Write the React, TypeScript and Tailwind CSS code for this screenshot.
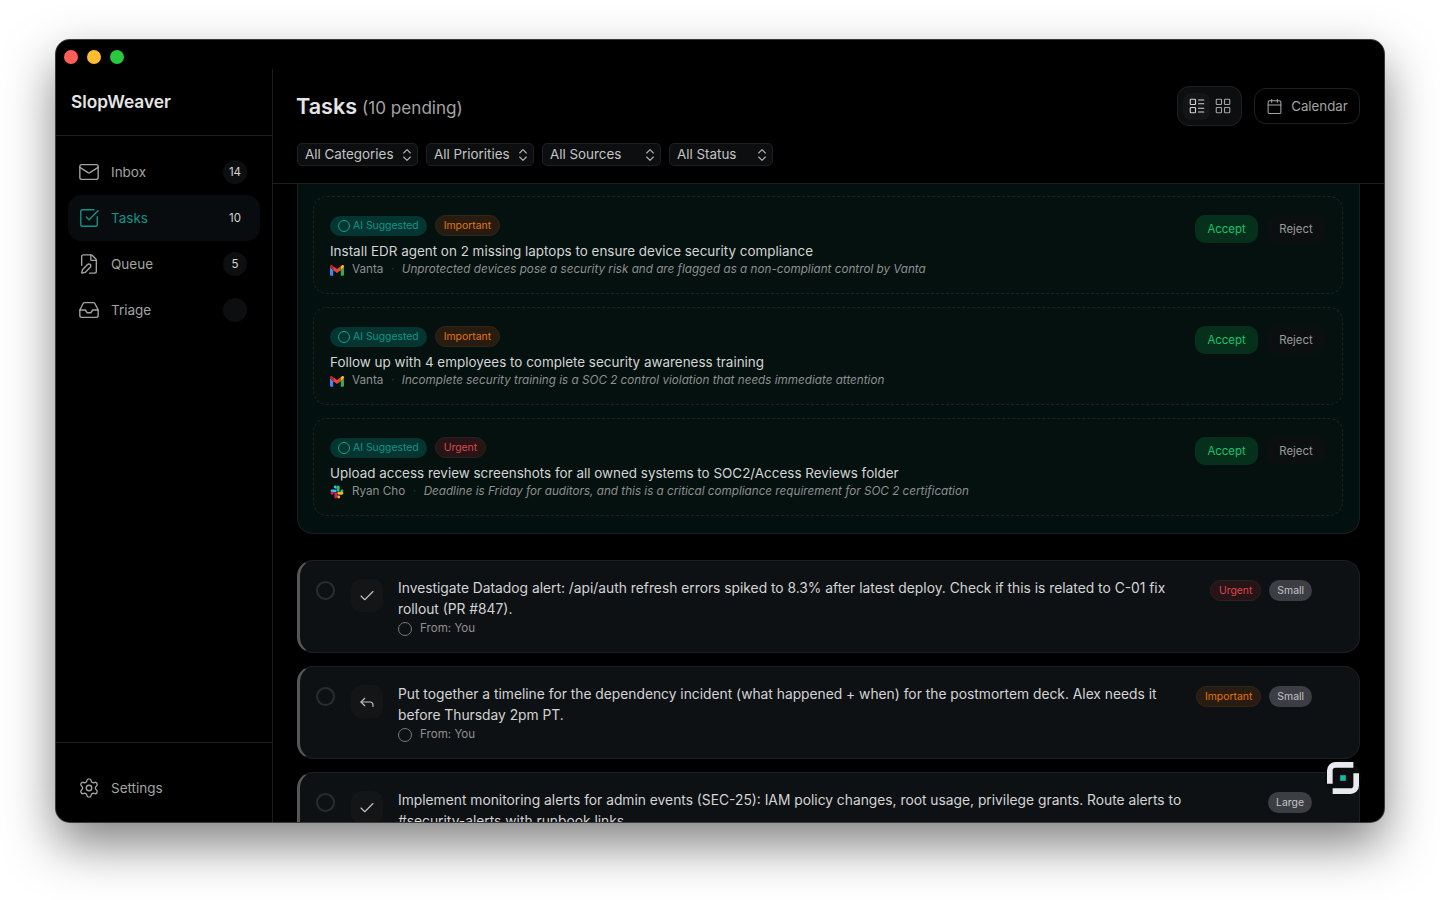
import { Calendar, Check, ChevronsUpDown, FilePen, Inbox, LayoutGrid, LayoutList, Mail, Reply, Settings, SquareCheckBig } from "lucide-react"
import type { ReactNode } from "react"

function GmailIcon() {
  return (
    <svg viewBox="0 0 24 18" className="w-[14px] h-[11px] shrink-0">
      <path fill="#4285F4" d="M0 3v13.4C0 17.3.7 18 1.6 18h3.9V8.5L0 3z" />
      <path fill="#34A853" d="M18.5 8.5V18h3.9c.9 0 1.6-.7 1.6-1.6V3l-5.5 5.5z" />
      <path fill="#EA4335" d="M5.5 8.5V1.6L12 6.5l6.5-4.9v6.9L12 13.4 5.5 8.5z" />
      <path fill="#FBBC04" d="M18.5 1.6v6.9L24 3V2c0-1.8-2.1-2.900-3.600-1.800l-1.900 1.400z" />
      <path fill="#C5221F" d="M0 3l5.500 5.500V1.600L3.600.2C2.100-.9 0 .2 0 2v1z" />
    </svg>
  )
}

function SlackIcon() {
  return (
    <svg viewBox="0 0 24 24" className="w-[14px] h-[14px] shrink-0">
      <path fill="#36C5F0" d="M9 1a2.500 2.500 0 0 0 0 5h2.500V3.500A2.500 2.500 0 0 0 9 1zM3.500 7.500a2.500 2.500 0 0 0 0 5H9a2.500 2.500 0 0 0 0-5H3.500z" />
      <path fill="#2EB67D" d="M23 10a2.500 2.500 0 0 0-5 0v2.500h2.500A2.500 2.500 0 0 0 23 10zM16.500 3.500a2.500 2.500 0 0 0-5 0V9a2.500 2.500 0 0 0 5 0V3.500z" />
      <path fill="#ECB22E" d="M15 23a2.500 2.500 0 0 0 0-5h-2.500v2.500A2.500 2.500 0 0 0 15 23zM20.500 16.500a2.500 2.500 0 0 0 0-5H15a2.500 2.500 0 0 0 0 5h5.500z" />
      <path fill="#E01E5A" d="M1 14a2.500 2.500 0 0 0 5 0v-2.500H3.500A2.500 2.500 0 0 0 1 14zM7.500 20.500a2.500 2.500 0 0 0 5 0V15a2.500 2.500 0 0 0-5 0v5.500z" />
    </svg>
  )
}

function Logo() {
  return (
    <div className="absolute right-[23px] bottom-[26px] w-[36px] h-[36px] rounded-full bg-[#0a0c0e] flex items-center justify-center">
      <svg viewBox="0 0 34 34" className="w-[32px] h-[34px]">
        <path d="M3 23V9A6 6 0 0 1 9 3H28" fill="none" stroke="#e8eaed" strokeWidth="6" />
        <path d="M31 12V25A6 6 0 0 1 25 31H6" fill="none" stroke="#e8eaed" strokeWidth="6" />
        <rect x="14" y="14" width="6" height="6" fill="#14b8a6" />
      </svg>
    </div>
  )
}

function NavItem({ icon, label, count, active, empty }: { icon: ReactNode; label: string; count?: string; active?: boolean; empty?: boolean }) {
  return (
    <div className={`flex items-center h-[46px] pl-[10px] pr-[13px] rounded-[14px] ${active ? "bg-[#090c0e] text-[#0d9488]" : "text-[#a3a3a3]"}`}>
      <span className="w-[22px] flex justify-center">{icon}</span>
      <span className="ml-[11px] text-[13.5px]">{label}</span>
      {(count || empty) && (
        <span className={`ml-auto w-6 h-6 pt-px rounded-full flex items-center justify-center text-[11.5px] text-[#d4d4d4] ${active ? "" : "bg-[#0c0e10]"}`}>
          {count}
        </span>
      )}
    </div>
  )
}

function Filter({ label, width }: { label: string; width: string }) {
  return (
    <div className={`${width} h-[23px] pl-[7px] pr-[2px] flex items-center justify-between rounded-[5px] border border-[#1e2124] bg-[#0c0e10] text-[13.4px] whitespace-nowrap text-[#c4c4c4]`}>
      <span>{label}</span>
      <ChevronsUpDown className="w-4 h-4 text-[#b0b0b0]" strokeWidth={1.75} />
    </div>
  )
}

function PriorityBadge({ label }: { label: string }) {
  const urgent = label === "Urgent"
  return (
    <span className={`h-[21px] px-2 flex items-center rounded-full border text-[10.4px] ${urgent ? "bg-[#261416] border-[#302020] text-[#dc4a4f]" : "bg-[#281b10] border-[#32261a] text-[#e0760f]"}`}>
      {label}
    </span>
  )
}

const suggestions = [
  { priority: "Important", title: "Install EDR agent on 2 missing laptops to ensure device security compliance", source: "Vanta", reason: "Unprotected devices pose a security risk and are flagged as a non-compliant control by Vanta" },
  { priority: "Important", title: "Follow up with 4 employees to complete security awareness training", source: "Vanta", reason: "Incomplete security training is a SOC 2 control violation that needs immediate attention" },
  { priority: "Urgent", title: "Upload access review screenshots for all owned systems to SOC2/Access Reviews folder", source: "Ryan Cho", reason: "Deadline is Friday for auditors, and this is a critical compliance requirement for SOC 2 certification", slack: true },
]

const tasks = [
  { title: "Investigate Datadog alert: /api/auth refresh errors spiked to 8.3% after latest deploy. Check if this is related to C-01 fix rollout (PR #847).", priority: "Urgent", size: "Small" },
  { title: "Put together a timeline for the dependency incident (what happened + when) for the postmortem deck. Alex needs it before Thursday 2pm PT.", priority: "Important", size: "Small", reply: true },
  { title: "Implement monitoring alerts for admin events (SEC-25): IAM policy changes, root usage, privilege grants. Route alerts to #security-alerts with runbook links.", size: "Large" },
]

export default function App() {
  return (
    <div className="h-screen bg-white pt-10 px-14 font-['Inter',sans-serif] overflow-hidden">
      <div className="relative h-[782px] flex flex-col bg-black rounded-[14px] overflow-hidden ring-1 ring-[#3a3a3a] shadow-[0_22px_50px_rgba(0,0,0,0.5)]">
        {/* Title bar */}
        <div className="h-[29px] shrink-0 flex items-center gap-[9px] pl-2 pt-[5px]">
          <span className="w-[14px] h-[14px] rounded-full bg-[#ff5f57]" />
          <span className="w-[14px] h-[14px] rounded-full bg-[#febc2e]" />
          <span className="w-[14px] h-[14px] rounded-full bg-[#28c840]" />
        </div>

        <div className="flex flex-1 min-h-0">
          {/* Sidebar */}
          <aside className="w-[217px] shrink-0 flex flex-col border-r border-[#1c1e20]">
            <div className="h-[67px] shrink-0 flex items-center px-[15px] border-b border-[#1c1e20]">
              <span className="text-[17.3px] font-semibold text-[#e5e5e5]">SlopWeaver</span>
            </div>
            <nav className="pt-[13px] px-3">
              <NavItem icon={<Mail className="w-[22px] h-[22px]" strokeWidth={1.5} />} label="Inbox" count="14" />
              <NavItem active icon={<SquareCheckBig className="w-[22px] h-[22px]" strokeWidth={1.5} />} label="Tasks" count="10" />
              <NavItem icon={<FilePen className="w-[22px] h-[22px]" strokeWidth={1.5} />} label="Queue" count="5" />
              <NavItem empty icon={<Inbox className="w-[22px] h-[22px]" strokeWidth={1.5} />} label="Triage" />
            </nav>
            <div className="mt-auto h-[80px] shrink-0 border-t border-[#1c1e20] pt-[22px] px-3">
              <NavItem icon={<Settings className="w-[22px] h-[22px]" strokeWidth={1.5} />} label="Settings" />
            </div>
          </aside>

          {/* Main */}
          <main className="flex-1 min-w-0 flex flex-col">
            <header className="h-[115px] shrink-0 border-b border-[#1c1e20] px-6 pt-[17px]">
              <div className="flex items-center h-10">
                <h1 className="-ml-px text-[21.6px] font-semibold text-[#e5e5e5]">Tasks</h1>
                <span className="ml-[5px] mt-[4px] text-[17.1px] text-[#a3a3a3]">(10 pending)</span>
                <div className="ml-auto h-10 flex items-center p-[5px] rounded-[12px] border border-[#1e2124] bg-[#0c0e10]">
                  <span className="w-[27px] h-[27px] rounded-lg bg-[#131517] flex items-center justify-center">
                    <LayoutList className="w-[18px] h-[18px] text-[#d4d4d4]" strokeWidth={1.5} />
                  </span>
                  <span className="w-[26px] h-[27px] flex items-center justify-center">
                    <LayoutGrid className="w-[18px] h-[18px] text-[#a3a3a3]" strokeWidth={1.5} />
                  </span>
                </div>
                <div className="ml-3 h-9 w-[106px] pt-px flex items-center justify-center gap-2 rounded-[12px] border border-[#1e2124] text-[13.3px] text-[#a3a3a3]">
                  <Calendar className="w-[17px] h-[17px]" strokeWidth={1.5} />
                  Calendar
                </div>
              </div>
              <div className="mt-[17px] flex gap-2">
                <Filter label="All Categories" width="w-[121px]" />
                <Filter label="All Priorities" width="w-[108px]" />
                <Filter label="All Sources" width="w-[119px]" />
                <Filter label="All Status" width="w-[104px]" />
              </div>
            </header>

            <div className="flex-1 min-h-0 overflow-hidden px-6">
              {/* AI suggestions */}
              <section className="flex flex-col gap-[13px] pt-3 pl-[15px] pr-4 pb-[17px] bg-[#02110f] border-x border-b border-[#16211f] rounded-b-[16px]">
                {suggestions.map((s) => (
                  <div key={s.title} className="flex justify-between h-[98px] pt-[18px] pl-4 pr-4 bg-[#05110f] border border-dashed border-[#1a2523] rounded-[14px]">
                    <div>
                      <div className="flex items-center gap-2">
                        <span className="h-5 pl-2 pr-2 flex items-center gap-[3px] rounded-full bg-[#053531] text-[10.4px] text-[#0d9488]">
                          <span className="w-3 h-3 rounded-full border-[1.5px] border-[#0fa08f]" />
                          AI Suggested
                        </span>
                        <PriorityBadge label={s.priority} />
                      </div>
                      <p className="mt-[5px] text-[13.44px] leading-5 text-[#d4d4d4]">{s.title}</p>
                      <div className="flex items-center h-4 mt-px text-[11.7px] text-[#8f8f8f]">
                        <span className="w-[14px] flex justify-center">{s.slack ? <SlackIcon /> : <GmailIcon />}</span>
                        <span className="ml-2">{s.source}</span>
                        <span className="mx-[7.5px] text-[#333]">·</span>
                        <span className="italic">{s.reason}</span>
                      </div>
                    </div>
                    <div className="flex items-start gap-2">
                      <span className="w-[63px] h-7 pt-px rounded-[10px] bg-[#06301c] text-[#14c46c] text-[11.4px] flex items-center justify-center">Accept</span>
                      <span className="w-[60px] h-7 pt-px rounded-[10px] bg-[#0c0f10] text-[#9a9a9a] text-[11.4px] flex items-center justify-center">Reject</span>
                    </div>
                  </div>
                ))}
              </section>

              {/* Tasks */}
              <div className="mt-[26px] flex flex-col gap-[13px]">
                {tasks.map((t) => (
                  <div key={t.title} className="shrink-0 flex h-[93px] pt-[18px] pl-4 bg-[#0e1114] border border-[#1c1f22] border-l-[3px] border-l-[#55585b] rounded-[16px]">
                    <span className="mt-[2px] w-[19px] h-[19px] rounded-full border-2 border-[#2a2d30] shrink-0" />
                    <span className="ml-4 w-8 h-[33px] rounded-[10px] bg-[#131517] flex items-center justify-center shrink-0 text-[#c4c4c4]">
                      {t.reply ? <Reply className="w-[18px] h-[18px]" strokeWidth={1.5} /> : <Check className="w-[18px] h-[18px]" strokeWidth={1.5} />}
                    </span>
                    <div className="ml-[15px] w-[790px] shrink-0 -mt-px">
                      <p className="text-[13.8px] leading-[21px] text-[#d4d4d4]">{t.title}</p>
                      <div className="mt-px flex items-center gap-2 h-[15px] text-[11.6px] text-[#8f8f8f]">
                        <span className="w-[14px] h-[14px] rounded-full border-[1.5px] border-[#777]" />
                        From: You
                      </div>
                    </div>
                    <div className="ml-auto mr-[47px] h-[21px] mt-px flex items-center gap-2">
                      {t.priority && <PriorityBadge label={t.priority} />}
                      <span className="h-[21px] px-2 flex items-center rounded-full bg-[#3c3e44] text-[10.4px] text-[#c4c4c4]">{t.size}</span>
                    </div>
                  </div>
                ))}
              </div>
            </div>
          </main>
        </div>
        <Logo />
      </div>
    </div>
  )
}
